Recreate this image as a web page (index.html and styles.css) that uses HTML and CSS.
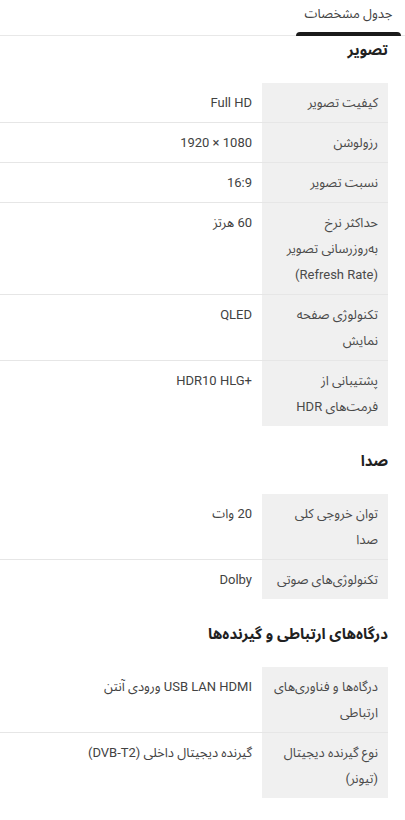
FILE: index.html
```html
<!DOCTYPE html>
<html lang="fa" dir="rtl">
<head>
<meta charset="utf-8">
<title>جدول مشخصات</title>
<link rel="stylesheet" href="styles.css">
</head>
<body>
<div class="tabs">
  <div class="tab active">جدول مشخصات</div>
</div>
<div class="specs">
  <section class="group">
    <h2 class="group-title">تصویر</h2>
    <div class="table">
      <div class="row"><div class="label">کیفیت تصویر</div><div class="value">Full HD</div></div>
      <div class="row"><div class="label">رزولوشن</div><div class="value">1080 × 1920</div></div>
      <div class="row"><div class="label">نسبت تصویر</div><div class="value">16:9</div></div>
      <div class="row"><div class="label">حداکثر نرخ به‌روزرسانی تصویر (Refresh Rate)</div><div class="value">60 هرتز</div></div>
      <div class="row"><div class="label">تکنولوژی صفحه نمایش</div><div class="value">QLED</div></div>
      <div class="row"><div class="label">پشتیبانی از فرمت‌های HDR</div><div class="value">+HDR10 HLG</div></div>
    </div>
  </section>
  <section class="group">
    <h2 class="group-title">صدا</h2>
    <div class="table">
      <div class="row"><div class="label">توان خروجی کلی صدا</div><div class="value">20 وات</div></div>
      <div class="row"><div class="label">تکنولوژی‌های صوتی</div><div class="value">Dolby</div></div>
    </div>
  </section>
  <section class="group">
    <h2 class="group-title">درگاه‌های ارتباطی و گیرنده‌ها</h2>
    <div class="table">
      <div class="row"><div class="label">درگاه‌ها و فناوری‌های ارتباطی</div><div class="value">USB LAN HDMI ورودی آنتن</div></div>
      <div class="row"><div class="label">نوع گیرنده دیجیتال (تیونر)</div><div class="value">گیرنده دیجیتال داخلی (DVB-T2)</div></div>
    </div>
  </section>
</div>
</body>
</html>
```

FILE: styles.css
```css
* { box-sizing: border-box; }
html, body {
  margin: 0;
  padding: 0;
  background: #ffffff;
}
body {
  font-family: Roboto, "Noto Sans Arabic", "DejaVu Sans", sans-serif;
  color: #424242;
  font-size: 13px;
  direction: rtl;
}
.tabs {
  display: flex;
  height: 36px;
  border-bottom: 1px solid #e8e8e8;
  padding-right: 4px;
}
.tab {
  position: relative;
  width: 105px;
  text-align: center;
  font-size: 13px;
  line-height: 28px;
  color: #424242;
}
.tab.active::after {
  content: "";
  position: absolute;
  left: 0;
  right: 0;
  bottom: -1px;
  height: 4px;
  background: #1a1a1a;
  border-radius: 4px 4px 0 0;
}
.specs {
  padding-right: 17px;
}
.group {
  margin-top: 21px;
}
.group:first-child {
  margin-top: 0;
}
.group-title {
  margin: 0 0 19px;
  font-size: 15px;
  line-height: 28px;
  font-weight: bold;
  color: #212121;
}
.table {
  display: flex;
  flex-direction: column;
}
.row {
  display: grid;
  grid-template-columns: 126px 1fr;
  border-top: 1px solid #e6e6e6;
}
.row:first-child {
  border-top: none;
}
.label {
  background: #f0f0f0;
  padding: 7px 10px 6px;
  line-height: 26px;
  color: #4a4a4a;
}
.value {
  padding: 7px 10px 6px;
  line-height: 26px;
  color: #424242;
}
```
